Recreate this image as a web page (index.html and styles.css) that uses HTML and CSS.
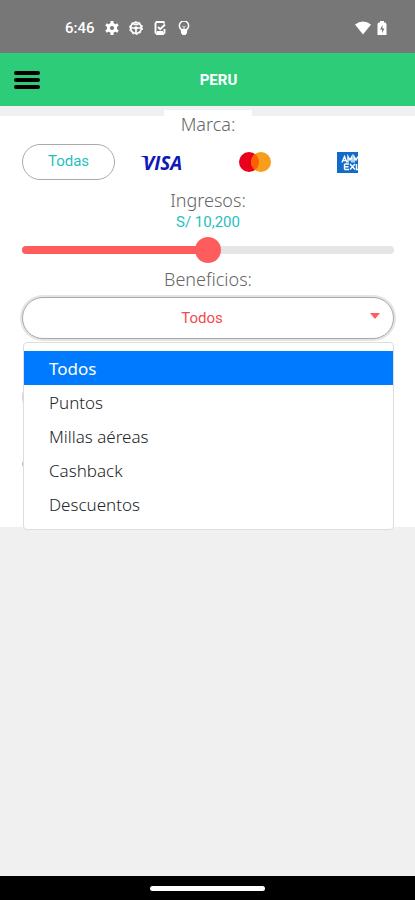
FILE: index.html
```html
<!DOCTYPE html>
<html lang="es">
<head>
<meta charset="utf-8">
<meta name="viewport" content="width=device-width, initial-scale=1">
<title>Tarjetas Peru</title>
<link rel="stylesheet" href="styles.css">
</head>
<body>
<div class="status">
  <span class="clock">6:46</span>
  <svg class="status-icon" viewBox="0 0 14 14" aria-hidden="true"><circle cx="7" cy="7" r="3.600" fill="none" stroke="#fff" stroke-width="3"/><path d="M7 0v3M7 11v3M1 3.500l2.500 1.500M10.500 9l2.500 1.500M1 10.500l2.500-1.500M10.500 5l2.500-1.500" stroke="#fff" stroke-width="3"/></svg>
  <svg class="status-icon" viewBox="0 0 14 14" aria-hidden="true"><circle cx="7" cy="7" r="5.400" fill="none" stroke="#fff" stroke-width="1.700"/><circle cx="7" cy="7" r="6.500" fill="none" stroke="#fff" stroke-dasharray="2 2.080"/><path d="M1.500 7h11M7 7v5.500M4.500 3.500h5" stroke="#fff" stroke-width="1.700"/><circle cx="7" cy="7" r="1.800" fill="#fff"/></svg>
  <svg class="status-icon" viewBox="0 0 14 14" aria-hidden="true"><path d="M11.500 2.500 10.500 1h-7L2.500 2.500v9L4 13h6l1.500-1.500V8M5 6l2.200 2.200L12 3.500M4 11h6" fill="none" stroke="#fff" stroke-width="1.900"/></svg>
  <svg class="status-icon" viewBox="0 0 14 14" aria-hidden="true"><path d="M4.500 8.500a4.600 4.600 0 1 1 5 0v1h-5z" fill="none" stroke="#fff" stroke-width="1.500"/><path d="M4 8h6v4L8.500 14h-3L4 12z" fill="#fff"/><path d="M5.500 5 7 6.500 8.500 5M7 6.500V9" fill="none" stroke="#fff"/></svg>
  <span class="spacer"></span>
  <svg class="wifi" viewBox="0 0 16 14" aria-hidden="true"><path d="M0 3.500Q8-2.500 16 3.500L8 13.500z" fill="#fff"/></svg>
  <svg class="battery" viewBox="0 0 10 14" aria-hidden="true"><path d="M3 0h4v1.500h1.500L9.500 3v11h-9V3L1.500 1.500H3z" fill="#fff"/><path d="M5.500 4 3 8.500h2V12l2.500-4.500h-2z" fill="#777"/></svg>
</div>
<header class="topbar">
  <button class="menu-button" type="button" aria-label="Menú"><span></span><span></span><span></span></button>
  <h1>PERU</h1>
</header>
<main>
  <form class="filters">
    <h2 class="label label-tab">Marca:</h2>
    <div class="brands">
      <button class="pill" type="button">Todas</button>
      <button class="brand" type="button" aria-label="Visa"><svg width="54" height="26" viewBox="0 0 54 26"><path d="M5 7h7l1.500 4Q10 8 5 7z" fill="#1018b8"/><text class="visa" x="8" y="21">VISA</text></svg></button>
      <button class="brand" type="button" aria-label="Mastercard"><svg width="32" height="20" viewBox="0 0 32 20"><circle cx="10" cy="10" r="10" fill="#eb001b"/><circle cx="22" cy="10" r="10" fill="#f79e1b"/><path d="M16 2a10 10 0 0 1 0 16 10 10 0 0 1 0-16z" fill="#ff5f00"/></svg></button>
      <button class="brand" type="button" aria-label="American Express"><svg width="21" height="21" viewBox="0 0 21 21"><path d="M0 0h21v21H0z" fill="#126bc9"/><path d="M5 10.500 7.500 4.500l2.500 6M6.500 8.500h3M11 10.500v-6l2 3.500 2-3.500v6M17 10.500v-6l2 3.500 2-3.500M7.500 12v5.500M7.500 12H12M7.500 14.800h4M7.500 17.500H12M13 12l5 5.500M18 12l-5 5.500M19.500 12v5.500H21" fill="none" stroke="#fff" stroke-width="1.400"/></svg></button>
    </div>
    <label class="label" for="income">Ingresos:</label>
    <output class="amount" for="income">S/ 10,200</output>
    <input class="slider" id="income" type="range" min="0" max="20400" value="10200">
    <label class="label" for="benefit">Beneficios:</label>
    <div class="dropdown">
      <select id="benefit">
        <option selected>Todos</option>
        <option>Puntos</option>
        <option>Millas aéreas</option>
        <option>Cashback</option>
        <option>Descuentos</option>
      </select>
      <svg class="caret" viewBox="0 0 10 6" aria-hidden="true"><path d="M0 0h10L5 6z" fill="#ff5c5e"/></svg>
      <ul class="options">
        <li><button class="option selected" type="button">Todos</button></li>
        <li><button class="option" type="button">Puntos</button></li>
        <li><button class="option" type="button">Millas aéreas</button></li>
        <li><button class="option" type="button">Cashback</button></li>
        <li><button class="option" type="button">Descuentos</button></li>
      </ul>
    </div>
    <div class="covered-pill"></div>
    <div class="covered-track"></div>
  </form>
</main>
<footer class="navbar"><span class="handle"></span></footer>
</body>
</html>
```
FILE: styles.css
```css
* { box-sizing: border-box; }

body {
  margin: 0;
  min-height: 100vh;
  display: flex;
  flex-direction: column;
  background: #f0f0f0;
  color: #666;
  font-family: "Noto Sans", "Open Sans", sans-serif;
}

button, select { font: inherit; color: inherit; }
button { padding: 0; border: 0; background: none; }

.status {
  display: flex;
  align-items: center;
  gap: 10px;
  height: 53px;
  padding: 2px 28px 0 65px;
  background: #777;
  color: #fff;
}
.clock { font: 500 15px/20px Roboto, sans-serif; }
.status-icon { width: 14px; height: 14px; }
.spacer { flex: 1; }
.wifi { width: 16px; height: 14px; }
.battery { width: 10px; height: 14px; margin-left: -4px; }

.topbar {
  display: grid;
  grid-template-columns: 26px 1fr;
  align-items: center;
  height: 53px;
  padding: 0 14px;
  background: #2dcc78;
}
.menu-button { display: grid; gap: 3px; }
.menu-button span { height: 4px; border-radius: 2px; background: #000; }
.topbar h1 {
  margin: 0;
  padding-right: 4px;
  color: #fff;
  font: 700 15px/20px Roboto, sans-serif;
  text-align: center;
}

main { flex: 1; padding-top: 10px; }
.filters {
  display: flex;
  flex-direction: column;
  padding: 0 21px 59px 22px;
  background: #fff;
}
.label {
  align-self: center;
  margin: 0;
  font-size: 18px;
  font-weight: 300;
  line-height: 24px;
}
.label-tab { margin-top: -6px; padding: 2px 17px 0; background: #fff; }

.brands {
  display: grid;
  grid-template-columns: repeat(4, 1fr);
  align-items: center;
  margin: 8px 0;
}
.pill {
  height: 36px;
  padding-bottom: 2px;
  border: 1px solid #aaa;
  border-radius: 18px;
  color: #1fbfc0;
  font: 400 15px/20px Roboto, sans-serif;
}
.brand { display: flex; justify-content: center; }
.visa { fill: #1018b8; font: italic 700 19px "Open Sans", sans-serif; }

.amount {
  align-self: center;
  color: #1fbfc0;
  font: 400 15px/20px Roboto, sans-serif;
}

.slider {
  appearance: none;
  width: 100%;
  height: 26px;
  margin: 5px 0 4px;
  background: none;
}
.slider::-webkit-slider-runnable-track {
  height: 8px;
  border-radius: 4px;
  background: linear-gradient(90deg, #ff5c5e 50%, #e5e5e5 50%);
}
.slider::-webkit-slider-thumb {
  appearance: none;
  width: 26px;
  height: 26px;
  margin-top: -9px;
  border-radius: 50%;
  background: #ff5c5e;
}

.dropdown { position: relative; margin-top: 6px; }
select {
  appearance: none;
  display: block;
  width: 100%;
  height: 42px;
  padding: 0 12px 0 0;
  border: 1px solid #aaa;
  border-radius: 21px;
  background: #fff;
  box-shadow: 0 0 0 2px #e4e4e4;
  color: #f24a4d;
  font: 400 15px/20px Roboto, sans-serif;
  text-align: center;
  text-align-last: center;
}
.caret { position: absolute; top: 16px; right: 14px; width: 10px; height: 6px; }
.options {
  position: absolute;
  top: calc(100% + 3px);
  left: 1px;
  right: 0;
  margin: 0;
  padding: 8px 0;
  border: 1px solid #ddd;
  border-radius: 4px;
  background: #fff;
  list-style: none;
}
.option {
  display: block;
  width: 100%;
  height: 34px;
  padding: 0 25px;
  color: #212529;
  font-size: 17px;
  font-weight: 300;
  text-align: left;
}
.option.selected { background: #007bff; color: #fff; font-weight: 400; }

.covered-pill {
  height: 36px;
  margin-top: 40px;
  border: 1px solid #ccc;
  border-radius: 18px;
}
.covered-track {
  height: 8px;
  margin-top: 45px;
  border-radius: 4px;
  background: linear-gradient(90deg, #ffa5a7 50%, #e5e5e5 50%);
}

.navbar {
  display: flex;
  justify-content: center;
  align-items: center;
  height: 24px;
  background: #000;
}
.handle { width: 115px; height: 5px; border-radius: 3px; background: #fff; }
```
